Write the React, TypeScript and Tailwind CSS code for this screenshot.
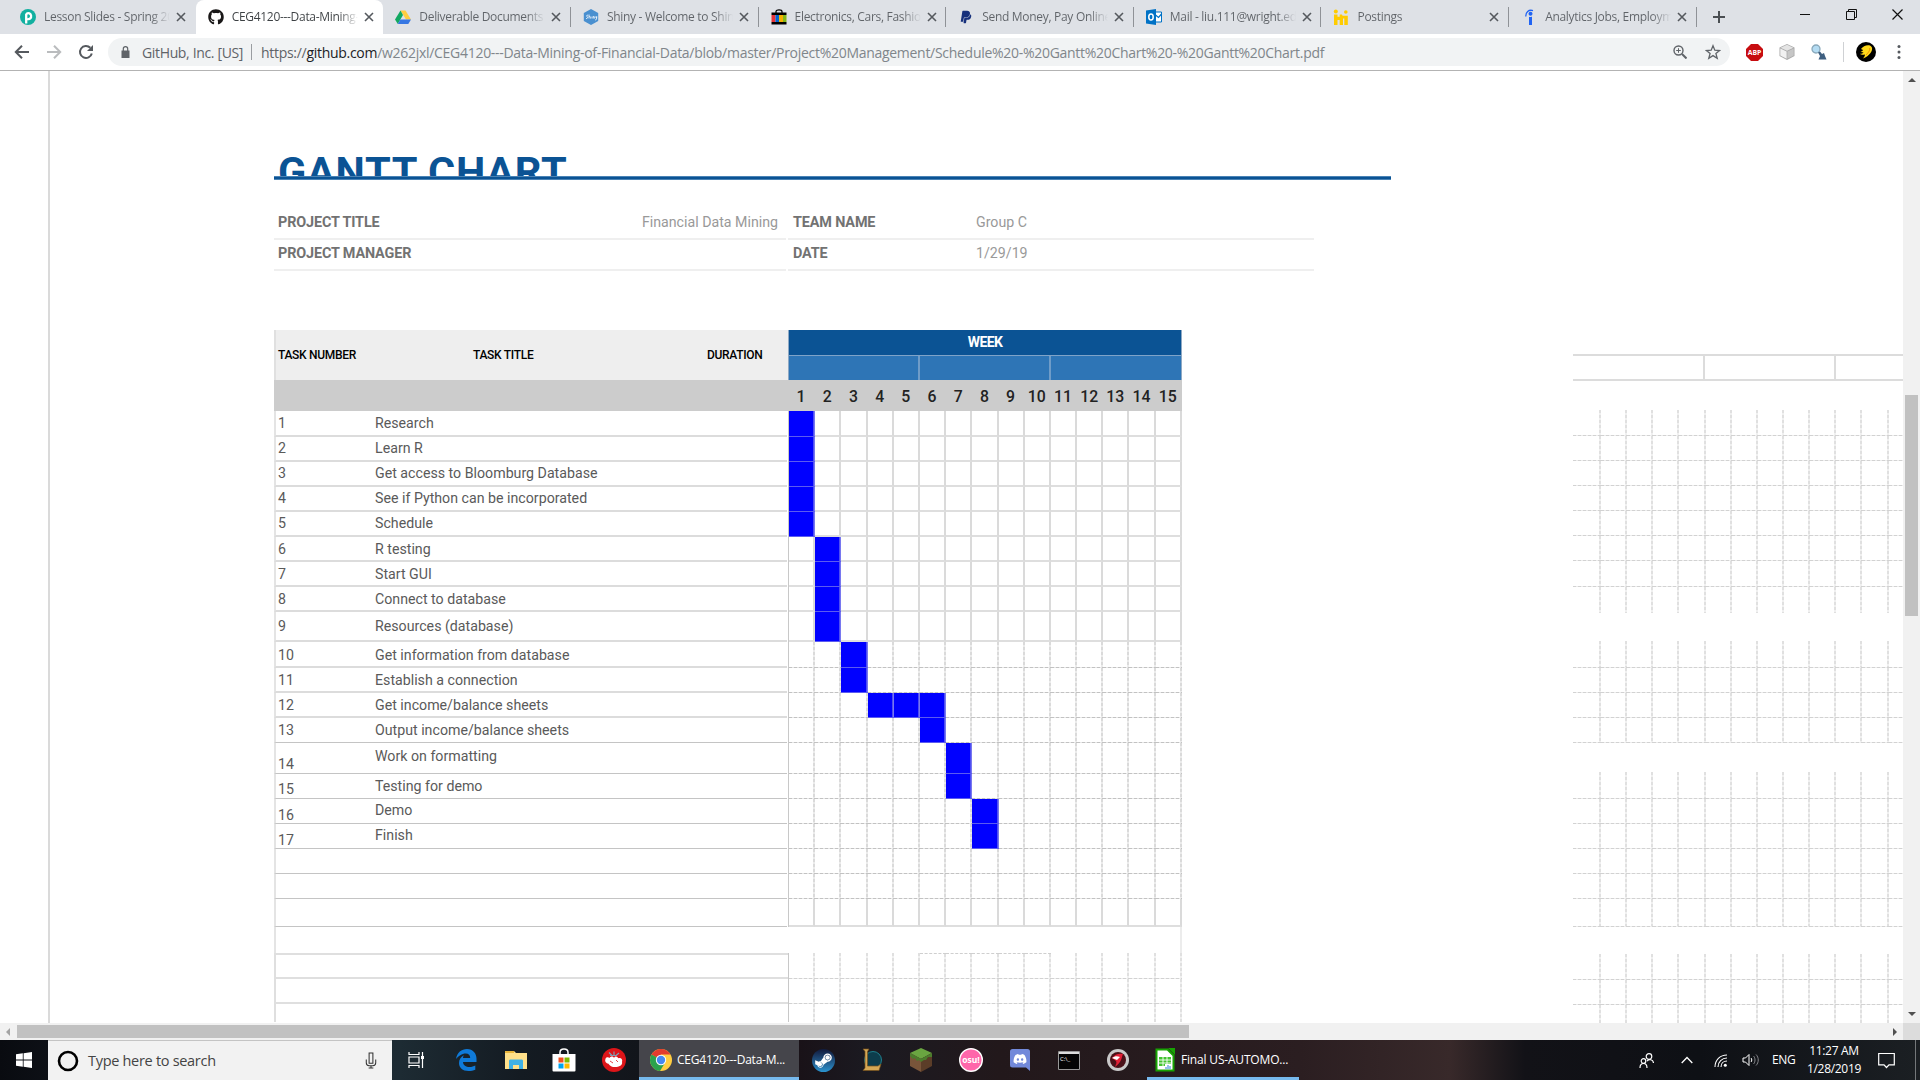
import type { ReactNode } from "react";
import { FaGithub, FaPaypal, FaSteamSymbol, FaDiscord } from "react-icons/fa";

const tabs: { title: string; icon: ReactNode; active?: boolean; sep?: boolean }[] = [
  {
    title: "Lesson Slides - Spring 2019",
    icon: (
      <svg viewBox="0 0 16 16" className="size-4">
        <circle cx="8" cy="8" r="8" fill="#12b0a0" />
        <path d="M6.200 14.500V5.500C6.800 4.300 8.200 3.900 9.400 4.400c1.900.8 2.300 3.600.9 5-.8.8-2.100.9-3 .4" fill="none" stroke="#fff" strokeWidth="2.300" />
      </svg>
    ),
  },
  { title: "CEG4120---Data-Mining-of", icon: <FaGithub className="size-4 text-[#191717]" />, active: true },
  {
    title: "Deliverable Documents - G",
    sep: true,
    icon: (
      <svg viewBox="0 0 16 16" className="size-4">
        <path d="M5.500 1.500h5L16 10.500h-5z" fill="#ffcd40" />
        <path d="M5.500 1.500 8 6 2.800 15 0 10.500z" fill="#11a861" />
        <path d="M5.400 10.500H16L13.300 15H2.800z" fill="#3777e3" />
      </svg>
    ),
  },
  {
    title: "Shiny - Welcome to Shiny",
    sep: true,
    icon: (
      <svg viewBox="0 0 16 16" className="size-4">
        <path d="M8 0l7.200 4v8L8 16 .8 12V4z" fill="#4a90d0" />
        <path d="M3 9.500c1.500.5 2-1 1.200-1.700S3.500 5.800 5 6.200M6 5.500v4M6 8c1.500-1.500 1.500.5 1.500 1.500M9 7.500v2M10.300 9.500v-2c1.400-.6 1.200 1 1.200 2M12.700 7.500c0 2 1 1.500 1 0 0 2 0 3.500-1.500 3.500" stroke="#fff" strokeWidth=".8" fill="none" />
      </svg>
    ),
  },
  {
    title: "Electronics, Cars, Fashion",
    sep: true,
    icon: (
      <svg viewBox="0 0 16 16" className="size-4">
        <path d="M5 4V2.500C5 .4 11 .4 11 2.500V4" fill="none" stroke="#000" strokeWidth="1.200" />
        <path d="M.5 3.500h15V6H.5zM.5 13h15v2.500H.5z" fill="#000" />
        <path d="M.5 6h4v7h-4z" fill="#e53238" />
        <path d="M4.500 6H8v7H4.500z" fill="#0064d2" />
        <path d="M8 6h4v7H8z" fill="#f5af02" />
        <path d="M12 6h3.500v7H12z" fill="#86b817" />
      </svg>
    ),
  },
  { title: "Send Money, Pay Online o", sep: true, icon: <FaPaypal className="size-[14px] text-[#16307c]" /> },
  {
    title: "Mail - liu.111@wright.edu",
    sep: true,
    icon: (
      <svg viewBox="0 0 16 16" className="size-4">
        <path d="M9 3h6.500v10H9z" fill="#fff" stroke="#0072c6" />
        <path d="M9.500 6l3 2.500 3-3.500" fill="none" stroke="#0072c6" strokeWidth="1.200" />
        <path d="M0 1.500 10 0v16L0 14.500z" fill="#0072c6" />
        <ellipse cx="5" cy="8" rx="2.200" ry="3" fill="none" stroke="#fff" strokeWidth="1.500" />
      </svg>
    ),
  },
  {
    title: "Postings",
    sep: true,
    icon: (
      <svg viewBox="0 0 16 16" className="size-4">
        <circle cx="2.800" cy="2.500" r="2" fill="#ffcc00" />
        <circle cx="12.800" cy="3" r="1.800" fill="#ffcc00" />
        <path d="M1 5.500h3.500v2.200h2.200V5.500H9c0 1 1 1.500 2 1.200h3.800V16h-3.500V9.500H10V16H6.700v-5H4.500v5H1z" fill="#ffcc00" />
      </svg>
    ),
  },
  {
    title: "Analytics Jobs, Employme",
    sep: true,
    icon: (
      <svg viewBox="0 0 16 16" className="size-4">
        <circle cx="9.500" cy="4.700" r="2" fill="#2164f3" />
        <path d="M8 7.700c1 .5 2 .4 3-.3V16H8z" fill="#2164f3" />
        <path d="M4.800 7.500C4.600 3.500 7.500.2 12 1.600" fill="none" stroke="#2164f3" strokeWidth="1.300" />
      </svg>
    ),
  },
];

function Cross({ className }: { className: string }) {
  return (
    <svg viewBox="0 0 10 10" className={className}>
      <path d="M1 1l8 8M9 1L1 9" stroke="currentColor" strokeWidth="1.600" fill="none" />
    </svg>
  );
}

function TabStrip() {
  return (
    <div className="flex h-[34px] bg-[#dee1e6] pl-2">
      {tabs.map((t) => (
        <div
          key={t.title}
          className={
            t.active
              ? "flex h-[34px] w-[187.650px] shrink-0 items-center rounded-t-lg bg-white pl-3"
              : "flex h-[34px] w-[187.650px] shrink-0 items-center pl-3"
          }
        >
          <div className="flex size-4 shrink-0 items-center justify-center">{t.icon}</div>
          <div
            className={
              t.active
                ? "ml-2 w-[126px] overflow-hidden bg-gradient-to-r from-[#3c4043] from-85% to-transparent bg-clip-text text-xs tracking-[-0.300px] whitespace-nowrap text-transparent"
                : "ml-2 w-[126px] overflow-hidden bg-gradient-to-r from-[#5f6368] from-85% to-transparent bg-clip-text text-xs tracking-[-0.300px] whitespace-nowrap text-transparent"
            }
          >
            {t.title}
          </div>
          <Cross className="ml-[6px] size-[10px] shrink-0 text-[#55595e]" />
          <div className={t.sep ? "ml-auto h-5 w-px bg-[#8f9297]" : "hidden"} />
        </div>
      ))}
      <svg viewBox="0 0 12 12" className="mt-[11px] ml-[16px] size-3">
        <path d="M6 0v12M0 6h12" stroke="#4a4e52" strokeWidth="2" />
      </svg>
      <div className="mr-[17px] ml-auto flex h-7 items-center gap-[35px]">
        <svg viewBox="0 0 11 11" className="size-[11px]">
          <path d="M0 5.500h10" stroke="#111" />
        </svg>
        <svg viewBox="0 0 11 11" className="size-[11px]">
          <path d="M.5 2.500h8v8h-8zM2.500 2.500v-2h8v8h-2" stroke="#111" fill="none" />
        </svg>
        <svg viewBox="0 0 11 11" className="size-[11px]">
          <path d="M.5.5l10 10M10.500.5l-10 10" stroke="#111" strokeWidth="1.200" />
        </svg>
      </div>
    </div>
  );
}

function Toolbar() {
  return (
    <div className="flex h-9 items-center bg-white pl-[14px] text-[14px]">
      <svg viewBox="0 0 16 16" className="size-4 shrink-0">
        <path d="M15 8H2M8 1.800 1.800 8 8 14.200" stroke="#55595e" strokeWidth="2" fill="none" />
      </svg>
      <svg viewBox="0 0 16 16" className="ml-4 size-4 shrink-0">
        <path d="M1 8h13M8 1.800 14.200 8 8 14.200" stroke="#babcbe" strokeWidth="2" fill="none" />
      </svg>
      <svg viewBox="0 0 16 16" className="ml-4 size-4 shrink-0">
        <path d="M13.800 9.500A6 6 0 1 1 12.300 3.800" stroke="#55595e" strokeWidth="2" fill="none" />
        <path d="M15 1v6H9z" fill="#55595e" />
      </svg>
      <div className="ml-[14px] flex h-7 w-[1622px] shrink-0 items-center rounded-full bg-[#f1f3f4] pl-[13px]">
        <svg viewBox="0 0 8 12" className="h-3 w-[9px] shrink-0">
          <path d="M0 4.500h8V12H0z" fill="#5f6368" />
          <path d="M1.800 5V2.800a2.200 2.200 0 0 1 4.400 0V5" stroke="#5f6368" strokeWidth="1.200" fill="none" />
        </svg>
        <span className="ml-[12px] w-[102px] tracking-[-0.350px] whitespace-nowrap text-[#5f6368]">GitHub, Inc. [US]</span>
        <div className="ml-[7px] h-4 w-px bg-[#9a9da1]" />
        <span className="ml-[9px] tracking-[-0.290px] whitespace-nowrap text-[#80868b]">
          <span className="text-[#5f6368]">https://</span>
          <span className="text-[#202124]">github.com</span>
          /w262jxl/CEG4120---Data-Mining-of-Financial-Data/blob/master/Project%20Management/Schedule%20-%20Gantt%20Chart%20-%20Gantt%20Chart.pdf
        </span>
        <svg viewBox="0 0 14 14" className="mr-[18px] ml-auto size-[14px]">
          <circle cx="5.500" cy="5.500" r="4.500" fill="none" stroke="#5f6368" strokeWidth="1.400" />
          <path d="M9 9l4.500 4.500" stroke="#5f6368" strokeWidth="2" />
          <path d="M5.500 3.200v4.600M3.200 5.500h4.600" stroke="#5f6368" />
        </svg>
        <svg viewBox="0 0 16 16" className="mr-[9px] size-4">
          <path d="M8 1.700l1.800 4.500 4.800.3-3.700 3 1.300 4.700L8 11.600l-4.200 2.600 1.300-4.700-3.700-3 4.800-.3z" fill="none" stroke="#5f6368" strokeWidth="1.300" />
        </svg>
      </div>
      <svg viewBox="0 0 16 16" className="ml-4 size-[17px]">
        <path d="M4.700 0h6.600L16 4.700v6.600L11.300 16H4.700L0 11.300V4.700z" fill="#c70d10" />
        <text x="8" y="10.500" fontSize="6.500" fontWeight="700" fill="#fff" textAnchor="middle">ABP</text>
      </svg>
      <svg viewBox="0 0 16 16" className="ml-4 size-4">
        <path d="M8 0l7.500 3.500v8.500L8 16 .5 12V3.500z" fill="#a9a9a9" />
        <path d="M8 .8l6.500 2.900L8 6.800 1.500 3.700z" fill="#e4e4e4" />
        <path d="M1.300 4.500 7.600 7.500v7.300L1.300 11.500z" fill="#f1f1f1" />
        <path d="M8.400 7.500l6.300-3v7l-6.300 3.300z" fill="#c6c6c6" />
      </svg>
      <svg viewBox="0 0 16 16" className="ml-4 size-4">
        <circle cx="5" cy="5" r="4" fill="#b4dcf3" stroke="#8aa9bb" strokeWidth="1.300" />
        <path d="M7 8.500l2-1 2 2.500 2-1 1 3 1.500 3.500H7.500L9 12z" fill="#3f5f80" />
      </svg>
      <div className="ml-[16px] h-5 w-px bg-[#cfd1d4]" />
      <svg viewBox="0 0 20 20" className="ml-[12px] size-5">
        <circle cx="10" cy="10" r="10" fill="#000" />
        <path d="M5 7c2-3 6-4.500 9-3.500 3 1.500 2.500 5 .5 7.500-1.500 2-4.500 4.500-7.500 5.500 1-1.500 2-2.500 2-4-1.500.5-4 .5-5-.8 1.500 0 3-.4 3.500-1.500-1 .3-2.500 0-3-.7 1 0 2-.5 2.500-1.500z" fill="#ffd91a" />
        <path d="M13.500 6c1 2-1.500 5-3.500 7" stroke="#f28c00" fill="none" />
      </svg>
      <svg viewBox="0 0 4 16" className="ml-[21px] h-4 w-1">
        <circle cx="2" cy="2.500" r="1.500" fill="#55595e" />
        <circle cx="2" cy="8" r="1.500" fill="#55595e" />
        <circle cx="2" cy="13.500" r="1.500" fill="#55595e" />
      </svg>
    </div>
  );
}

const weeks = [1, 2, 3, 4, 5, 6, 7, 8, 9, 10, 11, 12, 13, 14, 15];

/* Cell edges: a fine dash along the bottom and the right side. */
const edgePlace = "bg-no-repeat bg-[position:left_bottom,right_top] bg-[size:100%_1px,2px_100%] ";
const edgeOnlyRight = "bg-no-repeat bg-right bg-[size:2px_100%] ";
const dashBoth =
  edgePlace +
  "bg-[image:repeating-linear-gradient(90deg,#c2c2c2_0px_3px,#e6e6e6_3px_5px),repeating-linear-gradient(180deg,#dadada_0px_3px,#ebebeb_3px_5px)] ";
const dashBothLight =
  edgePlace +
  "bg-[image:repeating-linear-gradient(90deg,#d2d2d2_0px_3px,#ececec_3px_5px),repeating-linear-gradient(180deg,#e0e0e0_0px_3px,#f0f0f0_3px_5px)] ";
const dashRightLight =
  edgeOnlyRight + "bg-[image:repeating-linear-gradient(180deg,#e0e0e0_0px_3px,#f0f0f0_3px_5px)] ";
const dashBar =
  edgePlace +
  "bg-[#0000ff] bg-[image:linear-gradient(#5c5cf0,#5c5cf0),linear-gradient(90deg,#3a3af4,#8c8cee)] ";

const rows: { n?: string; title?: string; h: string; bars: number[]; pt?: string; npt?: string }[] = [
  { n: "1", title: "Research", h: "h-[26px]", bars: [1] },
  { n: "2", title: "Learn R", h: "h-[25px]", bars: [1], pt: "pt-[2px]", npt: "pt-[2px]" },
  { n: "3", title: "Get access to Bloomburg Database", h: "h-[25px]", bars: [1], pt: "pt-[2px]", npt: "pt-[2px]" },
  { n: "4", title: "See if Python can be incorporated", h: "h-[25px]", bars: [1], pt: "pt-[2px]", npt: "pt-[2px]" },
  { n: "5", title: "Schedule", h: "h-[25px]", bars: [1], pt: "pt-[2px]", npt: "pt-[2px]" },
  { n: "6", title: "R testing", h: "h-[25px]", bars: [2] },
  { n: "7", title: "Start GUI", h: "h-[25px]", bars: [2] },
  { n: "8", title: "Connect to database", h: "h-[25px]", bars: [2] },
  { n: "9", title: "Resources (database)", h: "h-[30px]", bars: [2], pt: "pt-[5px]", npt: "pt-[5px]" },
  { n: "10", title: "Get information from database", h: "h-[26px]", bars: [3], pt: "pt-[4px]", npt: "pt-[4px]" },
  { n: "11", title: "Establish a connection", h: "h-[25px]", bars: [3] },
  { n: "12", title: "Get income/balance sheets", h: "h-[25px]", bars: [4, 5, 6] },
  { n: "13", title: "Output income/balance sheets", h: "h-[25px]", bars: [6] },
  { n: "14", title: "Work on formatting", h: "h-[31px]", bars: [7], pt: "pt-[4px]", npt: "pt-[12px]" },
  { n: "15", title: "Testing for demo", h: "h-[25px]", bars: [7], npt: "pt-[6px]" },
  { n: "16", title: "Demo", h: "h-[25px]", bars: [8], pt: "pt-[2px]", npt: "pt-[7px]" },
  { n: "17", title: "Finish", h: "h-[25px]", bars: [8], pt: "pt-[2px]", npt: "pt-[7px]" },
  { h: "h-[25px]", bars: [] },
  { h: "h-[25px]", bars: [] },
  { h: "h-[28px]", bars: [] },
];

function GanttRows() {
  return (
    <>
      {rows.map((r, i) => {
        const solid = i < 9;
        return (
          <div key={i} className={"flex " + r.h}>
            <div
              className={
                (i < 12 ? "border-b-2 border-b-[#dcdcdc] " : "border-b border-b-[#c4c4c4] ") +
                "flex w-[513px] border-l-2 border-l-[#e4e4e4] pl-[2px] text-[14.200px] leading-[18px] text-[#5a5a5a]"
              }
            >
              <div className={"w-[97px] " + (r.npt ?? "pt-[3px]")}>{r.n}</div>
              <div className={r.pt ?? "pt-[3px]"}>{r.title}</div>
            </div>
            <div className="ml-px flex border-l border-[#c8c8c8]">
              {weeks.map((w) => {
                const bar = r.bars.includes(w);
                const width = w === 15 ? "w-[26.100px] " : "w-[26.200px] ";
                if (bar) return <div key={w} className={width + dashBar} />;
                if (solid || i === 19)
                  return <div key={w} className={width + "border-r-2 border-b-2 border-r-[#dadada] border-b-[#dedede]"} />;
                return <div key={w} className={width + dashBoth} />;
              })}
            </div>
          </div>
        );
      })}
    </>
  );
}

const tailRows = ["h-[26px]", "h-[25px]", "h-[18px]"];

function TailRows() {
  return (
    <>
      {tailRows.map((h, i) => (
        <div key={i} className={"flex " + h}>
          <div
            className={
              i === 0
                ? "w-[514px] border-t-2 border-b-2 border-l-2 border-[#dfdfdf]"
                : i === 1
                  ? "w-[514px] border-b-2 border-l-2 border-[#dfdfdf]"
                  : "w-[514px] border-l-2 border-[#dfdfdf]"
            }
          />
          <div className="flex border-l border-[#c8c8c8]">
            {weeks.map((w) => (
              <div
                key={w}
                className={
                  (i === 0 && w >= 6 && w <= 10 ? "border-t border-dashed border-t-[#cfcfcf] " : "") +
                  (w === 15 ? "w-[26.100px] " : "w-[26.200px] ") +
                  (i < 2 && !(i === 1 && w === 4) ? dashBothLight : dashRightLight)
                }
              />
            ))}
          </div>
        </div>
      ))}
    </>
  );
}

function InfoRow({ label, value, label2, value2, h }: { label: string; value: string; label2: string; value2: string; h: string }) {
  return (
    <div className={"flex gap-[2px] text-[14.200px] leading-[18px] text-[#999999] " + h}>
      <div className="flex w-[512px] items-end justify-between border-b-2 border-[#efefef] pr-[8px] pb-[7px] pl-1">
        <span className="text-[14.400px] leading-[16px] font-bold tracking-[-0.130px] text-[#727272]">{label}</span>
        <span>{value}</span>
      </div>
      <div className="flex w-[526px] items-end border-b-2 border-[#efefef] pb-[7px] pl-[5px]">
        <span className="w-[183px] text-[14.400px] leading-[16px] font-bold tracking-[-0.130px] text-[#727272]">{label2}</span>
        <span>{value2}</span>
      </div>
    </div>
  );
}

const sideBlocks: { top: string; rows: string[]; openEnd: boolean }[] = [
  { top: "mt-[29px]", rows: ["h-[26px]", "h-[25px]", "h-[25px]", "h-[25px]", "h-[25px]", "h-[25px]", "h-[26px]", "h-[26px]"], openEnd: true },
  { top: "mt-[28px]", rows: ["h-[27px]", "h-[25px]", "h-[25px]", "h-[25px]"], openEnd: false },
  { top: "mt-[29px]", rows: ["h-[27px]", "h-[25px]", "h-[25px]", "h-[25px]", "h-[25px]", "h-[28px]"], openEnd: false },
  { top: "mt-[27px]", rows: ["h-[26px]", "h-[25px]", "h-[30px]"], openEnd: true },
];

function SideGrid() {
  return (
    <div className="ml-auto w-[330px] shrink-0 overflow-hidden pt-[283px]">
      <div className="flex h-[27px] border-y-2 border-[#dcdcdc]">
        <div className="w-[132px] border-r-2 border-[#dcdcdc]" />
        <div className="w-[131px] border-r-2 border-[#dcdcdc]" />
      </div>
      {sideBlocks.map((b, k) => (
        <div key={k} className={b.top}>
          {b.rows.map((h, i) => (
            <div key={i} className={"flex " + h}>
              {weeks.slice(0, 13).map((w) => (
                <div
                  key={w}
                  className={
                    (w === 1 ? "w-[28px] shrink-0 " : "w-[26.150px] shrink-0 ") +
                    (b.openEnd && i === b.rows.length - 1 ? dashRightLight : dashBothLight)
                  }
                />
              ))}
            </div>
          ))}
        </div>
      ))}
    </div>
  );
}

function Document() {
  return (
    <div className="flex h-[952px] w-[1903px] overflow-hidden bg-white font-[Roboto,sans-serif]">
      <div className="ml-[48px] w-[2px] bg-[#dadada]" />
      <div className="ml-[224px] w-[1117px]">
        <div className="mt-[75px] h-[30px] overflow-hidden pt-px pl-1 text-[41.500px] leading-[50px] font-bold tracking-[0.700px] whitespace-nowrap text-[#0b5394]">
          GANTT CHART
        </div>
        <div className="h-1 w-[1117px] border-y border-[#4a83b5] bg-[#0b5394]" />
        <InfoRow label="PROJECT TITLE" value="Financial Data Mining" label2="TEAM NAME" value2="Group C" h="h-[60px]" />
        <InfoRow label="PROJECT MANAGER" value="" label2="DATE" value2="1/29/19" h="h-[31px]" />
        <div className="mt-[59px] flex h-[50px]">
          <div className="flex w-[514px] items-center border-l-2 border-[#e0e0e0] bg-[#eeeeee] text-[12px] font-medium tracking-[-0.300px] text-black">
            <span className="ml-[2px] w-[195px]">TASK NUMBER</span>
            <span className="w-[234px]">TASK TITLE</span>
            <span>DURATION</span>
          </div>
          <div className="w-[394px] border-x border-[#8fa9c4]">
            <div className="flex h-[26px] items-center justify-center border-b border-[#7fa3c8] bg-[#0b5394] text-[14px] font-bold tracking-[-0.600px] text-white">
              WEEK
            </div>
            <div className="flex h-[24px] bg-[#2e75b6]">
              <div className="w-[131px] border-r-2 border-[#6f9cc8]" />
              <div className="w-[131px] border-r-2 border-[#6f9cc8]" />
            </div>
          </div>
        </div>
        <div className="flex h-[31px] w-[908px] items-center bg-[#cccccc] pt-[2px] pl-[514px] text-[15.800px] font-medium text-[#222]">
          {weeks.map((w) => (
            <div key={w} className="w-[26.200px] text-center">
              {w}
            </div>
          ))}
        </div>
        <GanttRows />
        <div className="h-[26px] w-[908px] border-x-2 border-l-[#e4e4e4] border-r-[#ececec]" />
        <TailRows />
      </div>
      <SideGrid />
    </div>
  );
}

function Arrow({ d, className, color }: { d: string; className: string; color: string }) {
  return (
    <svg viewBox="0 0 8 8" className={className}>
      <path d={d} fill={color} />
    </svg>
  );
}

function Taskbar() {
  return (
    <div className="flex h-10 items-center bg-[linear-gradient(90deg,#090b10_0px,#0d1016_48px,#1d2b33_400px,#141b22_520px,#12151b_639px,#191218_800px,#1b1a21_870px,#22181b_1000px,#2b1e21_1300px,#38292a_1450px,#121217_1525px,#0e1015_1700px,#1b1f23_1915px)] text-white">
      <div className="flex h-10 w-12 items-center justify-center">
        <svg viewBox="0 0 16 16" className="size-4">
          <path d="M0 2.300 6.800 1.300v6.300H0zM7.600 1.200 16 0v7.600H7.600zM0 8.400h6.800v6.300L0 13.700zM7.600 8.400H16V16l-8.400-1.200z" fill="#fff" />
        </svg>
      </div>
      <div className="flex h-10 w-[344px] items-center border-t border-[#c4c4c4] bg-[#f2f2f2] pl-[9px]">
        <svg viewBox="0 0 22 22" className="size-[22px]">
          <circle cx="11" cy="11" r="9" fill="none" stroke="#000" strokeWidth="2.600" />
        </svg>
        <span className="ml-[9px] text-[14.500px] tracking-[-0.300px] whitespace-nowrap text-[#444]">Type here to search</span>
        <svg viewBox="0 0 12 18" className="mr-[15px] ml-auto h-[17px] w-3">
          <path d="M4 1h4v11H4zM1 8v3.500c0 2 1 3 3 3h4c2 0 3-1 3-3V8M6 14.500V17M3.500 17h5" stroke="#333" strokeWidth="1.100" fill="none" />
        </svg>
      </div>
      <div className="flex w-[247px] items-center pl-[16px]">
        <svg viewBox="0 0 17 16" className="h-4 w-[17px]">
          <path d="M1 0v2.500h10V0M1 16v-2.500h10V16M1 5h10v6H1zM14.500 0v16" stroke="#fff" strokeWidth="1.200" fill="none" />
          <path d="M13 4h3v3h-3z" fill="#fff" />
        </svg>
        <svg viewBox="0 0 22 22" className="ml-[30px] size-[22px]">
          <path d="M1 10C2 3.500 6.500 0 12 0c6 0 9.500 4.500 9.500 9.500V13H8c.2 3.500 3 5 6.500 5 2.300 0 4.200-.6 5.800-1.500v4.200C18.500 21.500 16 22 13.500 22 7.500 22 4 18.500 4 14c0-3.600 1.800-6.200 4.800-7.800C8.200 7.200 8 8 8 9h7.200c0-3-1.600-4.500-4.400-4.500C7 4.500 3.300 7 1 10z" fill="#0f7ad8" />
        </svg>
        <svg viewBox="0 0 22 20" className="ml-[28px] h-5 w-[22px]">
          <path d="M0 1h9l2 2h11v16H0z" fill="#ffe08a" />
          <path d="M0 1h9v2H0z" fill="#e9b53b" />
          <path d="M4 19v-8c0-1 .5-1.500 1.500-1.500h11c1 0 1.500.5 1.500 1.500v8h-4v-4H8v4z" fill="#3fb1e5" />
        </svg>
        <svg viewBox="0 0 24 24" className="ml-[25px] size-6">
          <path d="M8 7V4.500c0-4.600 8-4.600 8 0V7" stroke="#fff" strokeWidth="1.500" fill="none" />
          <path d="M.5 6h23v16.500a1 1 0 0 1-1 1h-21a1 1 0 0 1-1-1z" fill="#fff" />
          <path d="M6.500 9.500h5v5h-5z" fill="#f25022" />
          <path d="M12.500 9.500h5v5h-5z" fill="#7fba00" />
          <path d="M6.500 15.500h5v5h-5z" fill="#00a4ef" />
          <path d="M12.500 15.500h5v5h-5z" fill="#ffb900" />
        </svg>
        <svg viewBox="0 0 24 24" className="ml-[26px] size-6">
          <circle cx="12" cy="12" r="12" fill="#dd1519" />
          <path d="M3.500 11c0-2 3-2.500 4-1 1-2 4-2 4.500 0 1-2.500 4-1.500 4 .3 3-1 5 1 4 3.700 1 3-3 5-7 5-5 0-5-2-7-3.500-2 0-3.500-2.500-2.500-4.500z" fill="#fff" />
          <path d="M7 4.500l3 3M12 3.500v4M17 5l-3.500 3M8 7.500h7" stroke="#7fa0b4" strokeWidth="1.200" />
          <path d="M8 13l3 2M14 12l2 2" stroke="#dd1519" strokeWidth=".8" />
        </svg>
      </div>
      <div className="flex h-10 w-40 items-center border-b-[3px] border-[#76b9ed] bg-[#45454b] pt-[2px] pl-[11px]">
        <svg viewBox="0 0 22 22" className="size-[22px]">
          <circle cx="11" cy="11" r="11" fill="#ffcd41" />
          <path d="M11 11 1.500 5.500A11 11 0 0 1 20.500 5.500H11z" fill="#e33b2e" />
          <path d="M1.500 5.500A11 11 0 0 0 10 22l5.500-9z" fill="#2ba24c" />
          <circle cx="11" cy="11" r="5.200" fill="#fff" />
          <circle cx="11" cy="11" r="4.200" fill="#4688f1" />
        </svg>
        <span className="ml-[5px] text-xs tracking-[-0.230px] whitespace-nowrap">CEG4120---Data-M...</span>
      </div>
      <div className="flex w-[348px] items-center pl-[13px]">
        <div className="flex size-[23px] items-center justify-center rounded-full bg-linear-to-b from-[#101a3c] to-[#2a93cf]">
          <FaSteamSymbol className="size-[19px] text-white" />
        </div>
        <svg viewBox="0 0 22 24" className="ml-[25px] h-6 w-[22px]">
          <circle cx="13" cy="12" r="8.500" fill="#0d3d4c" stroke="#1e7f8c" />
          <path d="M3 1h6l-1.500 2.500V18H18l3-2-2 6.500H3l2-2.500V3.500z" fill="#d5a855" stroke="#76521d" strokeWidth=".7" />
        </svg>
        <svg viewBox="0 0 24 24" className="ml-[27px] size-6">
          <path d="M12 0l11 5-11 6L1 5z" fill="#6aa541" />
          <path d="M1 5l11 6v13L1 18z" fill="#79553a" />
          <path d="M23 5l-11 6v13l11-6z" fill="#5b3d28" />
          <path d="M1 5l11 6v3l-2-2-2 1-2-3-2 1-3-3zM23 5l-11 6v3l3-2 2 0 2-3 4 0z" fill="#4b7d2c" />
        </svg>
        <svg viewBox="0 0 24 24" className="ml-[26px] size-6">
          <circle cx="12" cy="12" r="11.300" fill="#ff66aa" stroke="#fff" strokeWidth="1.400" />
          <text x="12" y="15" fontSize="8.500" fontWeight="700" textAnchor="middle" fill="#fff">osu!</text>
        </svg>
        <svg viewBox="0 0 20 22" className="ml-[27px] h-[22px] w-5">
          <path d="M2.500 0h15A2.500 2.500 0 0 1 20 2.500V22l-4-3.500H2.500A2.500 2.500 0 0 1 0 16V2.500A2.500 2.500 0 0 1 2.500 0z" fill="#7289da" />
          <foreignObject x="3" y="3" width="14" height="14">
            <FaDiscord className="size-[14px] text-white" />
          </foreignObject>
        </svg>
        <svg viewBox="0 0 22 19" className="ml-[28px] h-[19px] w-[22px]">
          <path d="M.5.5h21v18H.5z" fill="#050505" stroke="#999" />
          <path d="M1 1h20v2H1z" fill="#ddd" />
          <text x="2" y="10" fontSize="6" fill="#fff">C:\_</text>
        </svg>
        <svg viewBox="0 0 22 22" className="ml-[27px] size-[22px]">
          <circle cx="11" cy="11" r="11" fill="#c9c9c9" />
          <circle cx="11" cy="11" r="8" fill="#4a1118" />
          <path d="M5 9c3-4 7-5 11-4-1 2-1 4-2 6s-3 5-6 7c1-3 2-4 1-6-1-1-3-2-4-3z" fill="#e32036" />
          <path d="M5 9c3-2 5-2 8-1l-3 3z" fill="#fff" />
        </svg>
      </div>
      <div className="flex h-10 w-[152px] items-center border-b-[3px] border-[#76b9ed] pt-[2px] pl-[8px]">
        <svg viewBox="0 0 20 24" className="h-6 w-5">
          <path d="M1.500 1.500h11l6 6v15h-17z" fill="#fff" stroke="#18a303" strokeWidth="2" />
          <path d="M13 0h7v7z" fill="#18a303" />
          <path d="M4 9h12v9H4z" fill="#43c330" />
          <path d="M4 12h12M4 15h12M8 9v9M12 9v9" stroke="#fff" strokeWidth=".9" />
          <path d="M10 16h6v5h-6z" fill="#fff" />
          <path d="M11 21v-2M13 21v-4M15 21v-3" stroke="#2a7fd4" />
        </svg>
        <span className="ml-[6px] text-xs tracking-[-0.180px] whitespace-nowrap">Final US-AUTOMO...</span>
      </div>
      <svg viewBox="0 0 15 15" className="ml-[340px] size-[15px]">
        <circle cx="10" cy="3.500" r="2.800" stroke="#fff" fill="none" strokeWidth="1.200" />
        <circle cx="4.500" cy="8" r="2.300" stroke="#fff" fill="none" strokeWidth="1.200" />
        <path d="M1 15c0-6 7-6 7 0M8 8c2-2 6-2 6.500 2" stroke="#fff" fill="none" strokeWidth="1.200" />
      </svg>
      <svg viewBox="0 0 12 8" className="ml-[27px] h-2 w-3">
        <path d="M.7 7 6 1.500 11.300 7" stroke="#fff" fill="none" strokeWidth="1.300" />
      </svg>
      <svg viewBox="0 0 13 13" className="ml-[21px] size-[13px]">
        <path d="M1 13C1 6 6 1 13 1M4 13c0-5 4-9 9-9M7 13c0-3.500 2.500-6 6-6" stroke="#fff" fill="none" strokeWidth="1.100" />
        <circle cx="11.300" cy="11.300" r="1.500" fill="#fff" />
      </svg>
      <svg viewBox="0 0 17 14" className="ml-[15px] h-[14px] w-[17px]">
        <path d="M1 5h2.500L7 1.500v11L3.500 9H1z" stroke="#fff" fill="none" />
        <path d="M9 5c1 1 1 3 0 4" stroke="#fff" fill="none" />
        <path d="M11.500 3c2 2 2 6 0 8M14 1.500c3 3 3 8 0 11" stroke="#84858a" fill="none" />
      </svg>
      <span className="ml-[13px] w-[24px] text-xs tracking-[-0.400px]">ENG</span>
      <div className="ml-[8px] w-[60px] text-center text-xs leading-[18px] tracking-[-0.300px] whitespace-nowrap">
        <div>11:27 AM</div>
        <div>1/28/2019</div>
      </div>
      <svg viewBox="0 0 17 17" className="ml-[14px] size-[17px]">
        <path d="M.7 1.500h15.600v11.300H11L8.500 15.500 6 12.800H.7z" stroke="#fff" fill="none" strokeWidth="1.200" />
      </svg>
      <div className="mr-1 ml-auto h-10 w-px bg-[#74777a]" />
    </div>
  );
}

export default function App() {
  return (
    <div className="h-[1080px] w-[1920px] overflow-hidden bg-white font-['Open_Sans','Noto_Sans',sans-serif]">
      <TabStrip />
      <Toolbar />
      <div className="flex h-[953px] border-t border-[#b3b3b3]">
        <Document />
        <div className="flex w-[17px] flex-col items-center bg-[#f1f1f1]">
          <Arrow d="M0 6 4 2 8 6z" className="mt-[5px] size-2" color="#505050" />
          <div className="mt-[311px] h-[221px] w-[13px] bg-[#c1c1c1]" />
          <Arrow d="M0 2h8L4 6z" className="mt-auto mb-[5px] size-2" color="#505050" />
        </div>
      </div>
      <div className="flex h-[17px] items-center bg-[#f1f1f1]">
        <Arrow d="M6 0v8L2 4z" className="ml-1 size-2" color="#a3a3a3" />
        <div className="ml-[5px] h-[13px] w-[1172px] bg-[#c1c1c1]" />
        <Arrow d="M2 0v8l4-4z" className="mr-1 ml-auto size-2" color="#505050" />
        <div className="h-[17px] w-[17px] bg-[#dcdcdc]" />
      </div>
      <Taskbar />
    </div>
  );
}
